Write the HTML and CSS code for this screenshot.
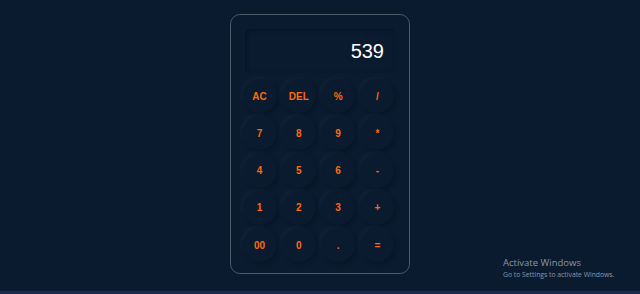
FILE: index.html
```html
<!DOCTYPE html>
<html lang="en">
<head>
  <meta charset="UTF-8">
  <meta name="viewport" content="width=device-width, initial-scale=1.0">
  <title>Calculator</title>
  <link rel="stylesheet" href="styles.css">
</head>
<body>
  <div class="calculator">
    <div class="display">539</div>
    <div class="keys">
      <button class="key">AC</button>
      <button class="key">DEL</button>
      <button class="key">%</button>
      <button class="key">/</button>
      <button class="key">7</button>
      <button class="key">8</button>
      <button class="key">9</button>
      <button class="key">*</button>
      <button class="key">4</button>
      <button class="key">5</button>
      <button class="key">6</button>
      <button class="key">-</button>
      <button class="key">1</button>
      <button class="key">2</button>
      <button class="key">3</button>
      <button class="key">+</button>
      <button class="key">00</button>
      <button class="key">0</button>
      <button class="key">.</button>
      <button class="key">=</button>
    </div>
  </div>

  <div class="watermark">
    <div class="watermark-title">Activate Windows</div>
    <div class="watermark-text">Go to Settings to activate Windows.</div>
  </div>
  <div class="taskbar-edge"></div>
</body>
</html>
```

FILE: styles.css
```css
body {
  font-family: Arial, 'Liberation Sans', sans-serif;
  margin: 0;
  padding: 0;
  background-color: #0a1a2f;
  height: 100vh;
  overflow: hidden;
}

.calculator {
  box-sizing: border-box;
  width: 180px;
  height: 260px;
  margin: 14px auto 0;
  padding: 14px 10px 0 11px;
  border: 1px solid #4b5868;
  border-radius: 10px;
  background-color: #0a1a2f;
}

.display {
  box-sizing: border-box;
  height: 44px;
  margin: 0 4px 0 3px;
  padding-right: 11px;
  display: flex;
  align-items: center;
  justify-content: flex-end;
  color: #ffffff;
  font-size: 20px;
  border-radius: 4px;
  box-shadow: inset 1px 1px 4px rgba(0, 0, 0, 0.3), 0 0 3px rgba(255, 255, 255, 0.02);
}

.keys {
  display: grid;
  grid-template-columns: repeat(4, 34px);
  grid-auto-rows: 34px;
  column-gap: 5.3px;
  row-gap: 3.3px;
  margin-top: 6px;
  padding-left: 0.5px;
}

.key {
  width: 34px;
  height: 34px;
  border: none;
  border-radius: 50%;
  background-color: #0a1a2f;
  color: #ff6a0a;
  font-family: Arial, 'Liberation Sans', sans-serif;
  font-size: 10px;
  font-weight: bold;
  padding: 0;
  box-shadow: -2px -2px 4px rgba(255, 255, 255, 0.035), 2px 2px 4px rgba(0, 0, 0, 0.2);
  cursor: pointer;
}

.watermark {
  position: absolute;
  left: 503px;
  top: 256px;
  color: #8f98a3;
  font-family: 'Segoe UI', 'Open Sans', sans-serif;
}

.watermark-title {
  font-size: 9.5px;
}

.watermark-text {
  font-size: 6.8px;
  margin-top: 1px;
}

.taskbar-edge {
  position: absolute;
  left: 0;
  right: 0;
  bottom: 0;
  height: 3px;
  background-color: #1d2a4d;
}
```
